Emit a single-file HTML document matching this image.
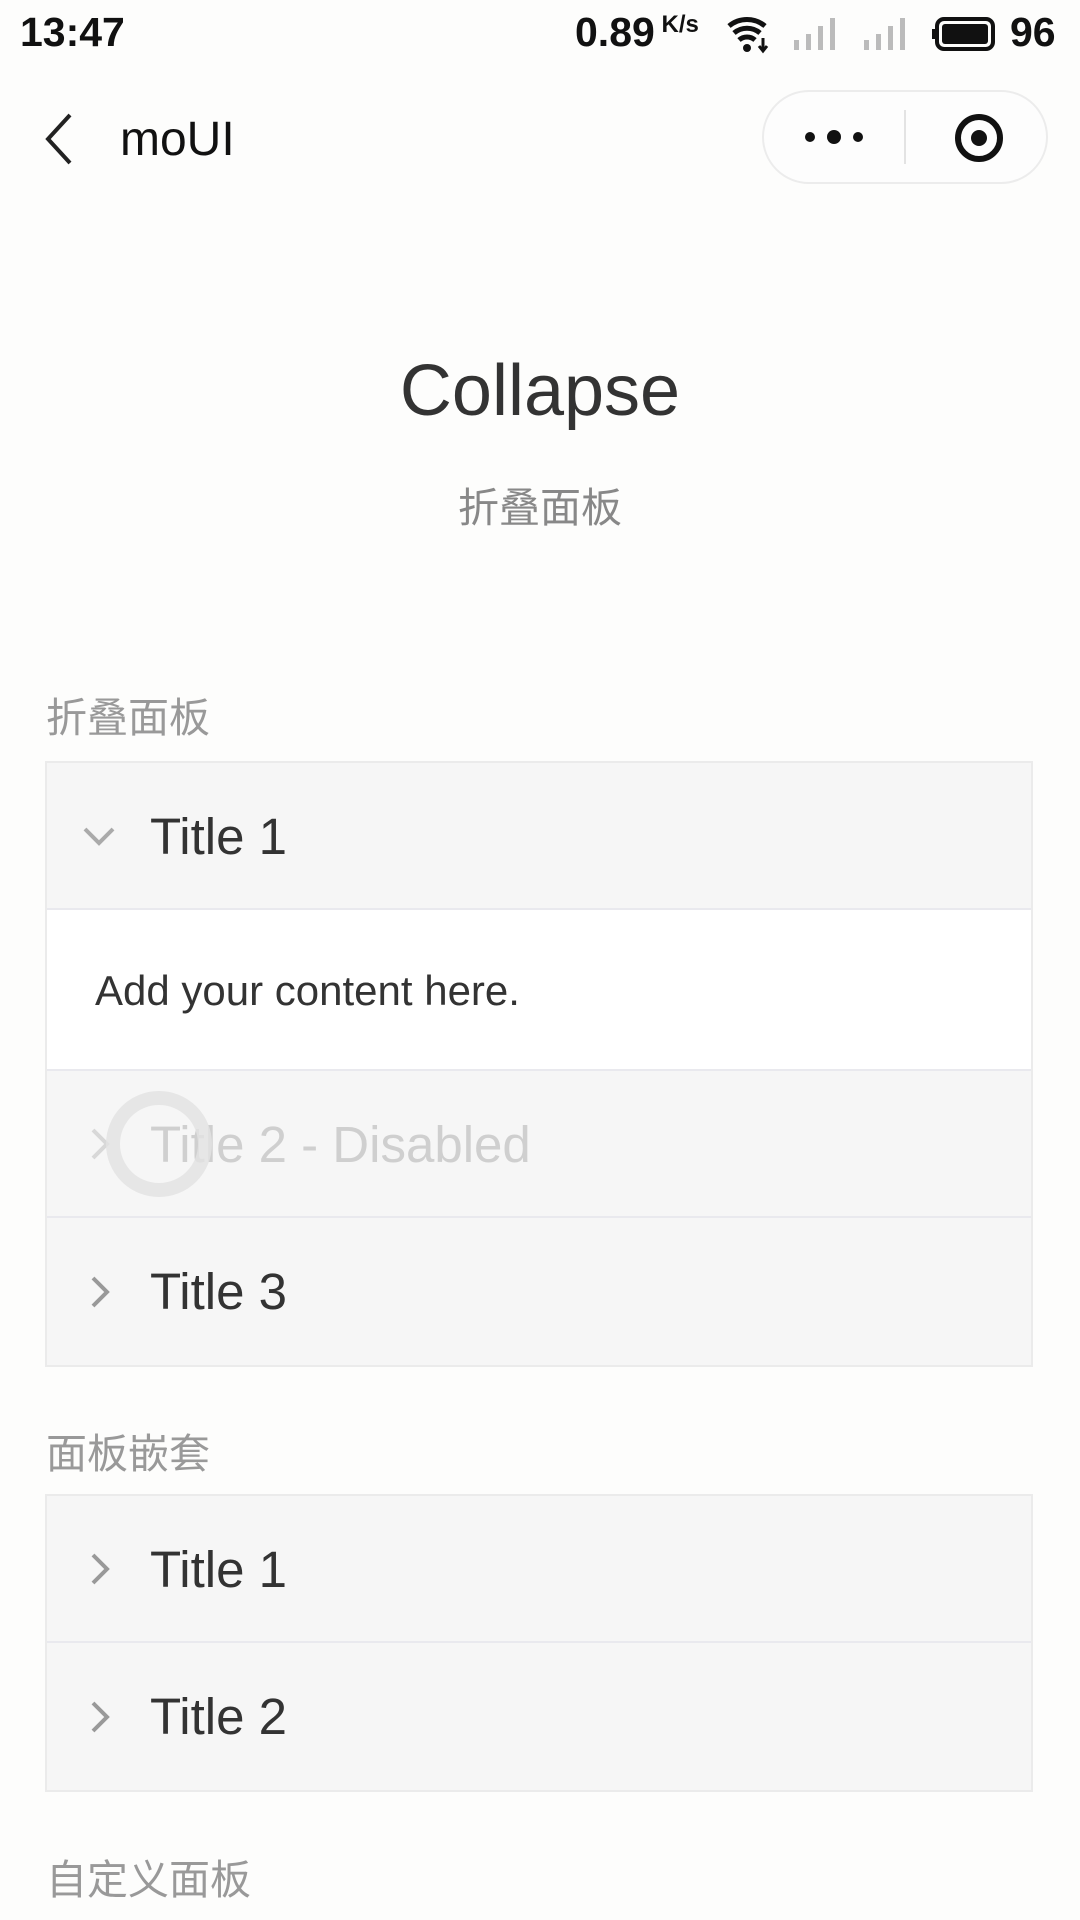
<!DOCTYPE html>
<html><head><meta charset="utf-8"><style>
*{margin:0;padding:0;box-sizing:border-box}
body{width:1080px;height:1920px;background:#fdfdfc;font-family:"Liberation Sans","Noto Sans CJK SC",sans-serif;position:relative;overflow:hidden;color:#333}
.abs{position:absolute}
.sb{font-size:41px;font-weight:bold;color:#111;top:9px}
.cap{left:762px;top:90px;width:286px;height:94px;border:2px solid #ececec;border-radius:47px;background:#fdfdfd}
.label{left:46px;font-size:41px;color:#999}
.panel{left:45px;width:988px;border:2px solid #ebebeb}
.row{height:147px;background:#f6f6f6;border-bottom:2px solid #e9e9ee;position:relative}
.row:last-child{border-bottom:none}
.row .t{position:absolute;left:103px;top:0;line-height:147px;font-size:51px;color:#333}
.row svg{position:absolute;left:30px;top:50%;margin-top:-22px}
.content{height:161px;background:#fff;border-bottom:2px solid #e9e9ee;line-height:161px;padding-left:48px;font-size:42px;color:#333}
</style></head><body>
<div class="abs sb" style="left:20px">13:47</div>
<div class="abs sb" style="left:575px">0.89<span style="font-size:24px;vertical-align:top;position:relative;top:2px"> K/s</span></div>
<svg class="abs" style="left:725px;top:12px" width="48" height="42" viewBox="0 0 48 42"><path d="M4 14a28 28 0 0 1 36 0M9 21a20 20 0 0 1 26 0M14 28a12 12 0 0 1 16 0" stroke="#111" stroke-width="5" fill="none"/><circle cx="22" cy="36" r="4" fill="#111"/><path d="M38 26v12M34 34l4 5 4-5" stroke="#111" stroke-width="3" fill="none"/></svg>
<svg class="abs" style="left:792px;top:14px" width="50" height="38"><g fill="#bbb"><rect x="2" y="26" width="5" height="10"/><rect x="14" y="20" width="5" height="16"/><rect x="26" y="12" width="5" height="24"/><rect x="38" y="4" width="5" height="32"/></g></svg>
<svg class="abs" style="left:862px;top:14px" width="50" height="38"><g fill="#bbb"><rect x="2" y="26" width="5" height="10"/><rect x="14" y="20" width="5" height="16"/><rect x="26" y="12" width="5" height="24"/><rect x="38" y="4" width="5" height="32"/></g></svg>
<svg class="abs" style="left:932px;top:16px" width="66" height="36"><rect x="5" y="3" width="56" height="30" rx="7" stroke="#111" stroke-width="4" fill="none"/><rect x="10" y="8" width="46" height="20" rx="3" fill="#111"/><rect x="0" y="13" width="4" height="10" fill="#111"/></svg>
<div class="abs sb" style="left:1010px">96</div>
<svg class="abs" style="left:40px;top:112px" width="36" height="54"><path d="M30 3L8 27l22 24" stroke="#222" stroke-width="4" fill="none"/></svg>
<div class="abs" style="left:120px;top:112px;font-size:48px;color:#111">moUI</div>
<div class="abs cap"></div>
<div class="abs" style="left:904px;top:110px;width:2px;height:54px;background:#e3e3e3"></div>
<svg class="abs" style="left:800px;top:122px" width="70" height="30"><circle cx="10" cy="15" r="5" fill="#111"/><circle cx="34" cy="15" r="7" fill="#111"/><circle cx="58" cy="15" r="5" fill="#111"/></svg>
<svg class="abs" style="left:953px;top:112px" width="52" height="52"><circle cx="26" cy="26" r="21" stroke="#111" stroke-width="6" fill="none"/><circle cx="26" cy="26" r="8" fill="#111"/></svg>
<div class="abs" style="left:0;width:1080px;top:350px;text-align:center;font-size:72px;color:#333">Collapse</div>
<div class="abs" style="left:0;width:1080px;top:474px;text-align:center;font-size:41px;color:#888">折叠面板</div>
<div class="abs label" style="top:684px">折叠面板</div>
<div class="abs panel" style="top:761px">
 <div class="row"><svg width="44" height="44"><path d="M8 15l14 14 14-14" stroke="#aaa" stroke-width="4" fill="none"/></svg><div class="t">Title 1</div></div>
 <div class="content">Add your content here.</div>
 <div class="row"><svg width="44" height="44"><path d="M16 8l14 14-14 14" stroke="#d8d8d8" stroke-width="4" fill="none"/></svg><div class="t" style="color:#cfcfcf">Title 2 - Disabled</div>
  <svg style="left:56px;margin-top:-56px" width="112" height="112"><circle cx="56" cy="56" r="46" stroke="#e2e2e2" stroke-width="14" fill="none" opacity=".8"/></svg></div>
 <div class="row"><svg width="44" height="44"><path d="M16 8l14 14-14 14" stroke="#999" stroke-width="4" fill="none"/></svg><div class="t">Title 3</div></div>
</div>
<div class="abs label" style="top:1420px">面板嵌套</div>
<div class="abs panel" style="top:1494px">
 <div class="row"><svg width="44" height="44"><path d="M16 8l14 14-14 14" stroke="#999" stroke-width="4" fill="none"/></svg><div class="t">Title 1</div></div>
 <div class="row"><svg width="44" height="44"><path d="M16 8l14 14-14 14" stroke="#999" stroke-width="4" fill="none"/></svg><div class="t">Title 2</div></div>
</div>
<div class="abs label" style="top:1846px">自定义面板</div>
</body></html>
